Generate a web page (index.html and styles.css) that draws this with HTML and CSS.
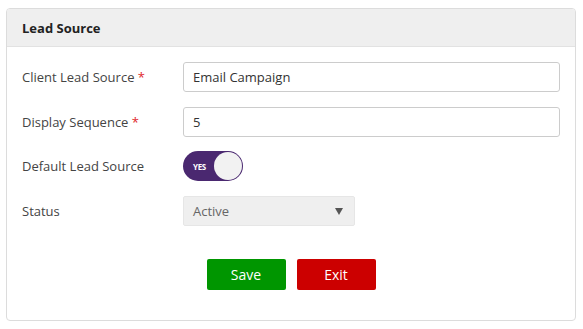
FILE: index.html
```html
<!DOCTYPE html>
<html>
<head>
<meta charset="utf-8">
<link rel="stylesheet" href="styles.css">
</head>
<body>
<div class="card">
  <div class="card-header">Lead Source</div>
  <div class="card-body">
    <div class="row">
      <label class="label">Client Lead Source <span class="req">*</span></label>
      <div class="input">Email Campaign</div>
    </div>
    <div class="row">
      <label class="label">Display Sequence <span class="req">*</span></label>
      <div class="input">5</div>
    </div>
    <div class="row">
      <label class="label">Default Lead Source</label>
      <div class="toggle"><span class="toggle-text">YES</span><span class="knob"></span></div>
    </div>
    <div class="row">
      <label class="label">Status</label>
      <div class="select"><span>Active</span><span class="arrow"></span></div>
    </div>
    <div class="actions">
      <button class="btn btn-save">Save</button>
      <button class="btn btn-exit">Exit</button>
    </div>
  </div>
</div>
</body>
</html>
```
FILE: styles.css
```css
* { box-sizing: border-box; }
html, body { margin: 0; padding: 0; background: #fff; }
body {
  font-family: "Open Sans", "Noto Sans", sans-serif;
  font-size: 13px;
  color: #333;
  padding: 8px 8px 0 6px;
}
.card {
  width: 570px;
  height: 313px;
  border: 1px solid #dcdcdc;
  border-radius: 4px;
  overflow: hidden;
}
.card-header {
  height: 38px;
  background: #efefef;
  border-bottom: 1px solid #e2e2e2;
  padding-left: 15px;
  display: flex;
  align-items: center;
  font-weight: bold;
  font-size: 13px;
  color: #222;
}
.card-body {
  padding: 15px 15px 0 15px;
}
.row {
  display: flex;
  align-items: center;
  height: 30px;
  margin-bottom: 15px;
}
.row:nth-child(3) { margin-top: -1px; }
.label {
  width: 161px;
  color: #444;
  font-size: 13px;
}
.req { color: #e0262c; }
.input {
  width: 377px;
  height: 30px;
  border: 1px solid #ccc;
  border-radius: 3px;
  display: flex;
  align-items: center;
  padding-left: 9px;
  color: #333;
}
.toggle {
  width: 60px;
  height: 30px;
  border-radius: 15px;
  background: #4a2870;
  position: relative;
  display: flex;
  align-items: center;
}
.toggle-text {
  color: #fff;
  font-size: 8px;
  font-weight: bold;
  margin-left: 10px;
  letter-spacing: -0.3px;
}
.knob {
  position: absolute;
  right: 1px;
  top: 1px;
  width: 28px;
  height: 28px;
  border-radius: 50%;
  background: #f2f2f2;
}
.select {
  width: 172px;
  height: 30px;
  background: #efefef;
  border: 1px solid #e6e6e6;
  border-radius: 2px;
  display: flex;
  align-items: center;
  justify-content: space-between;
  padding: 0 11px 0 9px;
  color: #666;
}
.arrow {
  width: 0; height: 0;
  border-left: 4.5px solid transparent;
  border-right: 4.5px solid transparent;
  border-top: 7px solid #555;
}
.actions {
  display: flex;
  justify-content: center;
  gap: 11px;
  margin-top: 33px;
}
.btn {
  width: 79px;
  height: 31px;
  border: none;
  border-radius: 2px;
  color: #fff;
  font-family: "Open Sans", "Noto Sans", sans-serif;
  font-size: 14px;
  padding: 0;
}
.btn-save { background: #009600; }
.btn-exit { background: #cc0000; }
```
